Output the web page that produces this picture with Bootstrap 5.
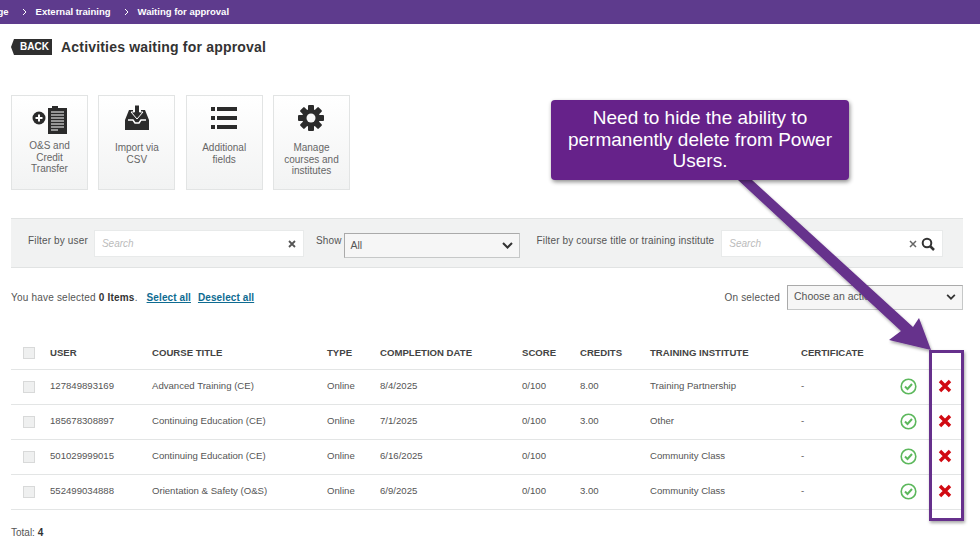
<!DOCTYPE html>
<html lang="en">
<head>
<meta charset="utf-8">
<title>Activities waiting for approval</title>
<link href="https://cdn.jsdelivr.net/npm/bootstrap@5.3.0/dist/css/bootstrap.min.css" rel="stylesheet">
<style>
html,body{height:559px;overflow:hidden;}
body{font-family:"Liberation Sans",Arial,sans-serif;font-size:10px;color:#444;background:#fff;position:relative;}
.crumbbar{height:24px;background:#5e3b8d;color:#fff;font-weight:700;font-size:9.5px;white-space:nowrap;gap:9px;margin-left:-40px;}
.crumbbar svg{width:5px;height:8px;}
.crumbbar span{margin-right:4px;}
.headrow{padding:15px 0 0 11px;height:71px;gap:9px;}
.backtag{width:41px;height:16px;background:#2f2f2f;color:#fff;font-weight:700;font-size:10px;clip-path:polygon(3px 0,100% 0,100% 100%,3px 100%,0 50%);padding-left:9px;line-height:16px;}
.pagehead{font-size:14px;font-weight:700;color:#333;margin:0;letter-spacing:.19px;line-height:16px;}
.tiles{padding-left:11px;gap:10.33px;}
.tile{width:77px;height:95px;border:1px solid #e2e4e4;background:linear-gradient(#fff,#f2f3f3);text-align:center;color:#666;font-size:10px;line-height:11.5px;padding:9px 8px 0;}
.tile svg{display:block;margin:0 auto;}
.tile.withgap p{margin:11px -3px 0;}
.tile p{margin:6px -1px 0;}
.filterbar{margin:28px 17px 0 11px;height:50px;background:#f1f2f2;border-top:1px solid #e1e3e3;border-bottom:1px solid #e1e3e3;padding:11px 0 0 17px;color:#555;letter-spacing:.15px;}
.fieldlabel{margin-top:5px;line-height:1.25;}
.searchbox{height:27px;background:#fff;border:1px solid #e8eaea;padding:0 7px;font-style:italic;color:#bbb;font-size:10px;letter-spacing:0;}
.sb1{width:210px;margin:0 12px 0 6px;}
.sb2{width:222px;margin-left:7px;}
.selbox{height:25px;border:1px solid #c6c8c8;background:#f6f6f6;padding:0 6px;font-size:10.5px;color:#555;border-top-color:#aaa;border-left-color:#aaa;letter-spacing:0;}
.sel1{width:176px;margin:3px 17px 0 2px;}
.selrow{margin:14px 17px 0 11px;height:30px;color:#555;letter-spacing:.2px;}
.selrow b{color:#333;}
.selrow a{color:#0e6b91;font-weight:700;margin-left:7px;letter-spacing:.1px;}
.selrow a.firstlink{margin-left:6px;}
.sel2{width:176px;height:25px;margin-left:7px;}
.gridtable{width:952px;margin:23px 0 0 11px;table-layout:fixed;font-size:9.6px;}
.gridtable>:not(caption)>*>*{padding:0;color:#555;border-bottom:1px solid #e3e5e5;height:35px;vertical-align:middle;}
.gridtable thead th{color:#444;font-weight:700;height:34px;padding-top:2px;}
.gridtable td.okcell{padding:0 0 1px 9px;}
.gridtable td.nocell{padding:0 0 2px 10px;}
.gridtable td svg{display:block;}
.tick{display:block;width:12px;height:12px;margin-left:12px;background:#eff0f0;border:1px solid #d8d9d9;}
.totalrow{padding:15px 0 0 11px;color:#555;}
.totalrow b{color:#333;}
.callout{position:absolute;left:551px;top:100px;width:298px;height:80px;background:#66228a;border-radius:4px;color:#fff;font-size:19px;line-height:21.5px;text-align:center;padding:7px 10px 0;box-shadow:1px 2px 4px rgba(0,0,0,.45);z-index:3;}
.markup{position:absolute;left:0;top:0;z-index:2;pointer-events:none;}
.redbox{position:absolute;left:929px;top:350px;width:35px;height:171px;border:3px solid #66308c;box-shadow:1px 2px 3px rgba(0,0,0,.35);z-index:2;}
</style>
</head>
<body>
<div class="crumbbar d-flex align-items-center">
  <span>Homepage</span>
  <svg viewBox="0 0 5 8"><path d="M1 1l3 3-3 3" fill="none" stroke="#fff" stroke-width="1"/></svg>
  <span>External training</span>
  <svg viewBox="0 0 5 8"><path d="M1 1l3 3-3 3" fill="none" stroke="#fff" stroke-width="1"/></svg>
  <span>Waiting for approval</span>
</div>
<div class="headrow d-flex align-items-start">
  <div class="backtag">BACK</div>
  <h1 class="pagehead">Activities waiting for approval</h1>
</div>
<div class="tiles d-flex">
  <div class="tile">
    <svg width="36" height="29" viewBox="0 0 36 29"><circle cx="7" cy="13" r="6.500" fill="#2b2b2b"/><path d="M7 9.500v7M3.500 13h7" stroke="#fff" stroke-width="2"/><path d="M16 3h4V1h6v2h9v26H16z" fill="#2b2b2b"/><path d="M19 7h13M19 10h13M19 13h13M19 16h13M19 19h13M19 22h13M19 25h7" stroke="#fff" stroke-width="1"/></svg>
    <p>O&amp;S and Credit Transfer</p>
  </div>
  <div class="tile withgap">
    <svg width="24" height="26" viewBox="0 0 24 26"><path d="M4 5h4v5h8V5h4l4 10v10H0V15z" fill="#2b2b2b"/><path d="M9.500 0h5v7h3.500L12 14 6 7h3.500z" fill="#2b2b2b" stroke="#fff" stroke-width="1"/><path d="M3 15h5l2 3h4l2-3h5" fill="none" stroke="#fff" stroke-width="1.500"/></svg>
    <p>Import via CSV</p>
  </div>
  <div class="tile withgap">
    <svg width="26" height="26" viewBox="0 0 26 26"><path d="M0 2h4v4H0zM6 2h20v4H6zM0 11h4v4H0zM6 11h20v4H6zM0 20h4v4H0zM6 20h20v4H6z" fill="#2b2b2b"/></svg>
    <p>Additional fields</p>
  </div>
  <div class="tile withgap">
    <svg width="26" height="26" viewBox="0 0 26 26"><g fill="#2b2b2b"><circle cx="13" cy="13" r="9"/><rect x="10" y="0" width="6" height="26" rx="1"/><rect x="10" y="0" width="6" height="26" rx="1" transform="rotate(45 13 13)"/><rect x="10" y="0" width="6" height="26" rx="1" transform="rotate(90 13 13)"/><rect x="10" y="0" width="6" height="26" rx="1" transform="rotate(135 13 13)"/></g><circle cx="13" cy="13" r="4.500" fill="#f8f8f8"/></svg>
    <p>Manage courses and institutes</p>
  </div>
</div>
<div class="filterbar d-flex align-items-start">
  <span class="fieldlabel">Filter by user</span>
  <div class="searchbox sb1 d-flex justify-content-between align-items-center"><span>Search</span><svg width="8" height="8" viewBox="0 0 8 8"><path d="M1 1l6 6M7 1L1 7" stroke="#555" stroke-width="1.800"/></svg></div>
  <span class="fieldlabel">Show</span>
  <div class="selbox sel1 d-flex justify-content-between align-items-center"><span>All</span><svg width="11" height="7" viewBox="0 0 11 7"><path d="M1 1l4.500 4.500L10 1" fill="none" stroke="#333" stroke-width="2"/></svg></div>
  <span class="fieldlabel">Filter by course title or training institute</span>
  <div class="searchbox sb2 d-flex justify-content-between align-items-center"><span>Search</span><span class="d-flex align-items-center gap-1"><svg width="8" height="8" viewBox="0 0 8 8"><path d="M1 1l6 6M7 1L1 7" stroke="#666" stroke-width="1.500"/></svg><svg width="14" height="14" viewBox="0 0 14 14"><circle cx="6" cy="6" r="4.300" fill="none" stroke="#333" stroke-width="2"/><path d="M9 9l4 4" stroke="#333" stroke-width="2.500"/></svg></span></div>
</div>
<div class="selrow d-flex justify-content-between align-items-center">
  <div>You have selected <b>0 Items</b>.&nbsp;<a class="firstlink" href="#">Select all</a><a href="#">Deselect all</a></div>
  <div class="d-flex align-items-center"><span>On selected</span>
    <div class="selbox sel2 d-flex justify-content-between align-items-center"><span>Choose an action</span><svg width="10" height="6" viewBox="0 0 11 7"><path d="M1 1l4.500 4.500L10 1" fill="none" stroke="#333" stroke-width="2"/></svg></div>
  </div>
</div>
<table class="table gridtable mb-0">
  <colgroup><col style="width:39px"><col style="width:102px"><col style="width:175px"><col style="width:53px"><col style="width:142px"><col style="width:58px"><col style="width:70px"><col style="width:151px"><col style="width:90px"><col style="width:37px"><col></colgroup>
  <thead><tr><th><i class="tick"></i></th><th>USER</th><th>COURSE TITLE</th><th>TYPE</th><th>COMPLETION DATE</th><th>SCORE</th><th>CREDITS</th><th>TRAINING INSTITUTE</th><th>CERTIFICATE</th><th></th><th></th></tr></thead>
  <tbody>
    <tr><td><i class="tick"></i></td><td>127849893169</td><td>Advanced Training (CE)</td><td>Online</td><td>8/4/2025</td><td>0/100</td><td>8.00</td><td>Training Partnership</td><td>-</td><td class="okcell"><svg width="17" height="17" viewBox="0 0 17 17"><circle cx="8.500" cy="8.500" r="7.300" fill="none" stroke="#5cb85c" stroke-width="1.600"/><path d="M5 8.500l2.500 2.500L12 6" fill="none" stroke="#5cb85c" stroke-width="2"/></svg></td><td class="nocell"><svg width="14" height="14" viewBox="0 0 14 14"><path d="M2 2l10 10M12 2L2 12" stroke="#d10a12" stroke-width="3.400"/></svg></td></tr>
    <tr><td><i class="tick"></i></td><td>185678308897</td><td>Continuing Education (CE)</td><td>Online</td><td>7/1/2025</td><td>0/100</td><td>3.00</td><td>Other</td><td>-</td><td class="okcell"><svg width="17" height="17" viewBox="0 0 17 17"><circle cx="8.500" cy="8.500" r="7.300" fill="none" stroke="#5cb85c" stroke-width="1.600"/><path d="M5 8.500l2.500 2.500L12 6" fill="none" stroke="#5cb85c" stroke-width="2"/></svg></td><td class="nocell"><svg width="14" height="14" viewBox="0 0 14 14"><path d="M2 2l10 10M12 2L2 12" stroke="#d10a12" stroke-width="3.400"/></svg></td></tr>
    <tr><td><i class="tick"></i></td><td>501029999015</td><td>Continuing Education (CE)</td><td>Online</td><td>6/16/2025</td><td>0/100</td><td></td><td>Community Class</td><td>-</td><td class="okcell"><svg width="17" height="17" viewBox="0 0 17 17"><circle cx="8.500" cy="8.500" r="7.300" fill="none" stroke="#5cb85c" stroke-width="1.600"/><path d="M5 8.500l2.500 2.500L12 6" fill="none" stroke="#5cb85c" stroke-width="2"/></svg></td><td class="nocell"><svg width="14" height="14" viewBox="0 0 14 14"><path d="M2 2l10 10M12 2L2 12" stroke="#d10a12" stroke-width="3.400"/></svg></td></tr>
    <tr><td><i class="tick"></i></td><td>552499034888</td><td>Orientation &amp; Safety (O&amp;S)</td><td>Online</td><td>6/9/2025</td><td>0/100</td><td>3.00</td><td>Community Class</td><td>-</td><td class="okcell"><svg width="17" height="17" viewBox="0 0 17 17"><circle cx="8.500" cy="8.500" r="7.300" fill="none" stroke="#5cb85c" stroke-width="1.600"/><path d="M5 8.500l2.500 2.500L12 6" fill="none" stroke="#5cb85c" stroke-width="2"/></svg></td><td class="nocell"><svg width="14" height="14" viewBox="0 0 14 14"><path d="M2 2l10 10M12 2L2 12" stroke="#d10a12" stroke-width="3.400"/></svg></td></tr>
  </tbody>
</table>
<div class="totalrow">Total: <b>4</b></div>

<svg class="markup" width="980" height="559" viewBox="0 0 980 559"><defs><filter id="ds" x="-10%" y="-10%" width="120%" height="120%"><feDropShadow dx="1" dy="2" stdDeviation="1.500" flood-opacity=".35"/></filter></defs><path d="M738 180h14L913 327l6-9 12 32-42-10 12-9z" fill="#66308c" filter="url(#ds)"/></svg>
<div class="redbox"></div>
<div class="callout">Need to hide the ability to permanently delete from Power Users.</div>
</body>
</html>
